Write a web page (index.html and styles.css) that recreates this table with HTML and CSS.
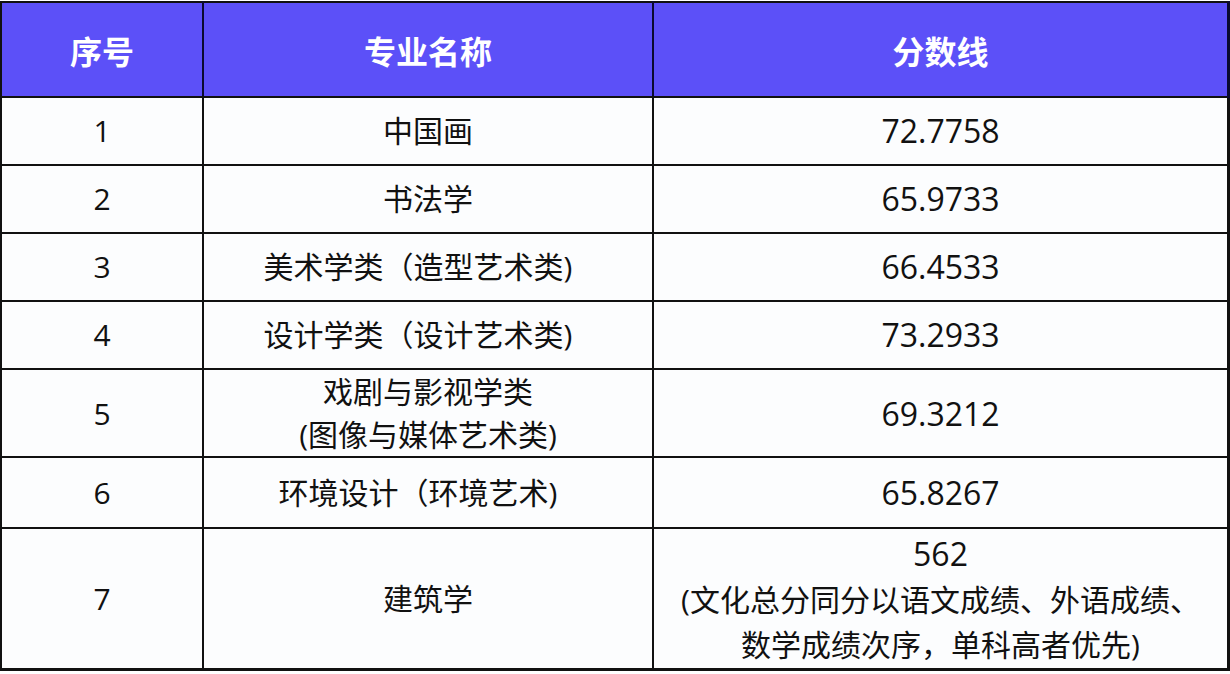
FILE: index.html
```html
<!DOCTYPE html>
<html lang="zh">
<head>
<meta charset="utf-8">
<link rel="stylesheet" href="styles.css">
</head>
<body>
<table class="score-table">
  <colgroup>
    <col class="c1"><col class="c2"><col class="c3">
  </colgroup>
  <thead>
    <tr class="head"><th>序号</th><th>专业名称</th><th>分数线</th></tr>
  </thead>
  <tbody>
    <tr class="r68"><td>1</td><td>中国画</td><td class="num">72.7758</td></tr>
    <tr class="r68"><td>2</td><td>书法学</td><td class="num">65.9733</td></tr>
    <tr class="r68"><td>3</td><td class="shift">美术学类（造型艺术类)</td><td class="num">66.4533</td></tr>
    <tr class="r68"><td>4</td><td class="shift">设计学类（设计艺术类)</td><td class="num">73.2933</td></tr>
    <tr class="r89"><td>5</td><td>戏剧与影视学类<br>(图像与媒体艺术类)</td><td class="num">69.3212</td></tr>
    <tr class="r71"><td>6</td><td class="shift">环境设计（环境艺术)</td><td class="num">65.8267</td></tr>
    <tr class="r141"><td>7</td><td>建筑学</td><td><span class="big">562</span><br>(文化总分同分以语文成绩、外语成绩、<br>数学成绩次序，单科高者优先)</td></tr>
  </tbody>
</table>
</body>
</html>
```
FILE: styles.css
```css
html, body {
  margin: 0;
  padding: 0;
  background: #ffffff;
}
.score-table {
  border-collapse: collapse;
  width: 1228px;
  table-layout: fixed;
  font-family: "Open Sans", "Noto Sans CJK SC", sans-serif;
  color: #111;
  background: #fcfdfe;
  margin-top: 1px;
}
.c1 { width: 202px; }
.c2 { width: 450px; }
.c3 { width: 576px; }
.score-table th,
.score-table td {
  border: 2px solid #111;
  text-align: center;
  vertical-align: middle;
  padding: 0;
}
.head th {
  background: #5c50f8;
  color: #fff;
  font-family: "Noto Sans CJK SC", sans-serif;
  font-weight: 700;
  font-size: 32px;
  height: 93px;
  border-right-color: #0a0a30;
}
.score-table td {
  font-size: 30px;
  line-height: 44px;
}
.score-table td.shift {
  padding-right: 20px;
}
.score-table td.num,
.big {
  font-size: 32px;
}
.r68 td { height: 66px; }
.r89 td { height: 86px; line-height: 43px; }
.r71 td { height: 69px; }
.r141 td { height: 139px; line-height: 45px; }
.score-table tr > :last-child { border-right-width: 4px; }
.score-table tbody tr:last-child td { border-bottom-width: 3px; }
```
